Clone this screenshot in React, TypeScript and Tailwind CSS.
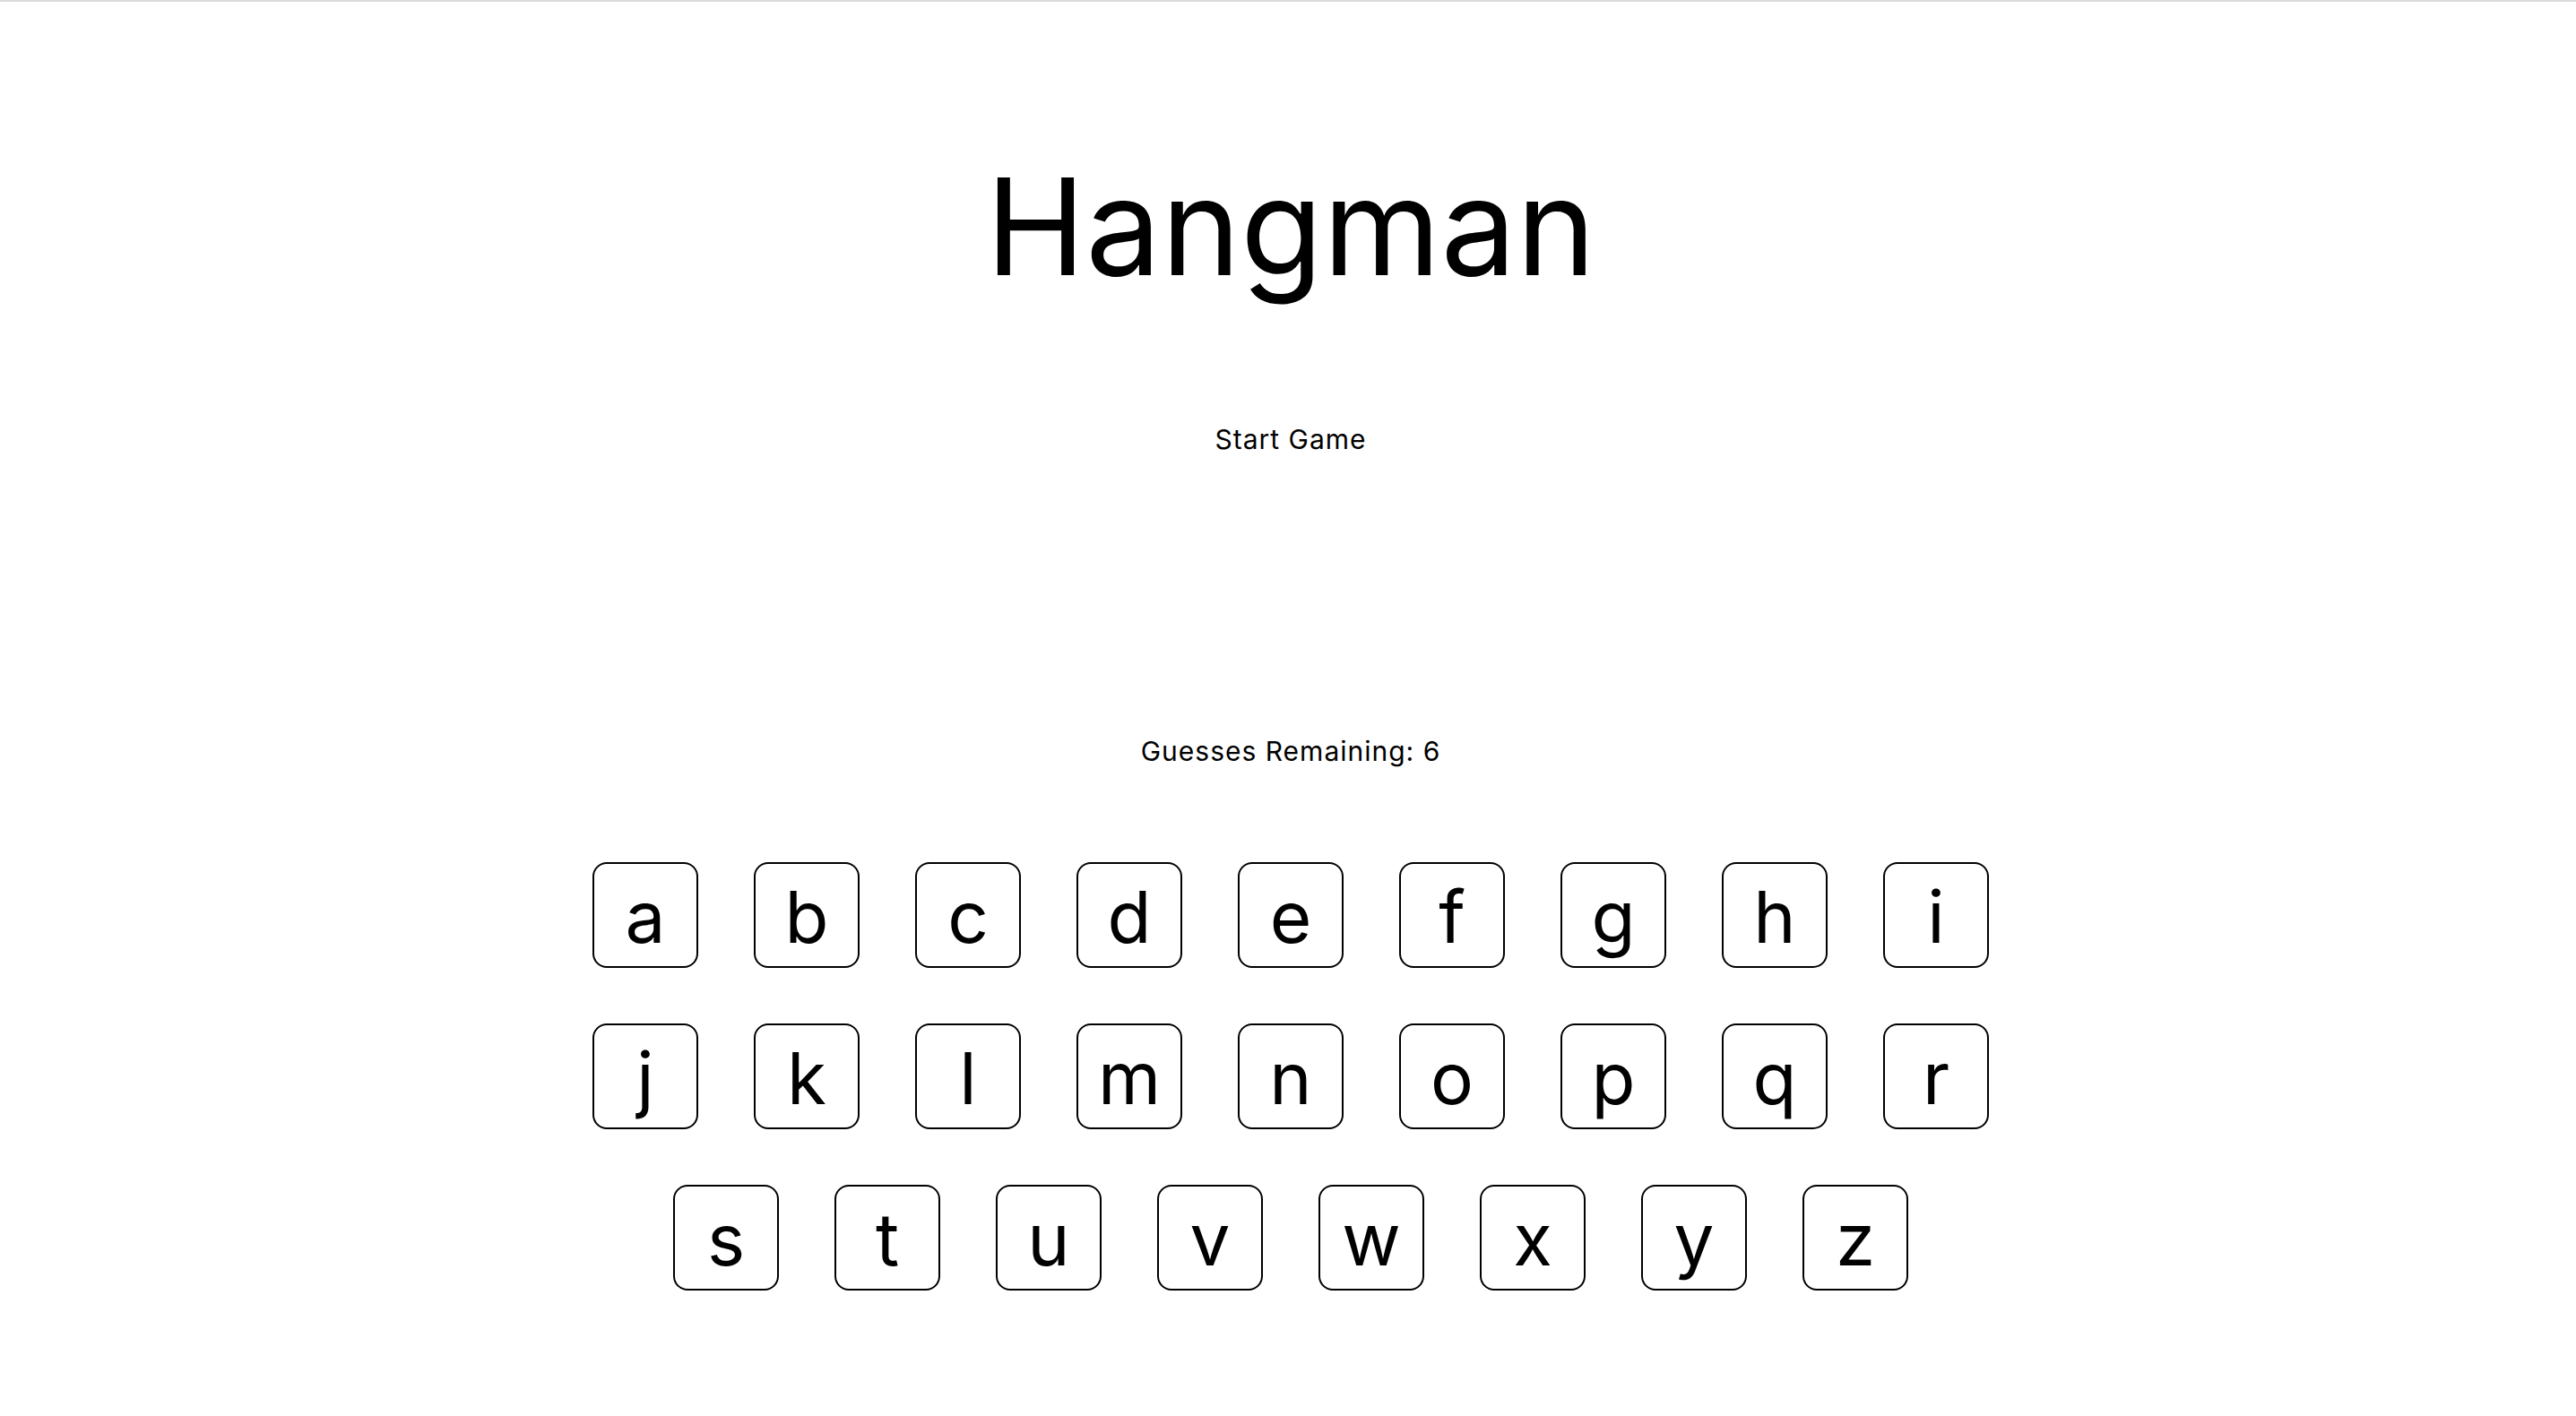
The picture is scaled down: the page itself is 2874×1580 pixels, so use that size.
import type { FunctionComponent } from "react";

const rows: string[][] = [
  ["a", "b", "c", "d", "e", "f", "g", "h", "i"],
  ["j", "k", "l", "m", "n", "o", "p", "q", "r"],
  ["s", "t", "u", "v", "w", "x", "y", "z"],
];

const LetterButton: FunctionComponent<{ letter: string }> = ({ letter }) => {
  return (
    <button className="flex h-[118px] w-[118px] items-center justify-center rounded-[16px] border-2 border-black bg-white pt-[4px] text-[80px] leading-none text-black">
      {letter}
    </button>
  );
};

const App: FunctionComponent = () => {
  return (
    <main
      className="flex min-h-screen flex-col items-center border-t-2 border-[#dadada] bg-white pl-[6px] text-black"
      style={{ fontFamily: "Inter, 'Liberation Sans', sans-serif" }}
    >
      <h1 className="mt-[176px] text-[150px] font-normal leading-none">Hangman</h1>
      <button className="mt-[147px] text-[30px] leading-none tracking-[1px]">Start Game</button>
      <p className="mt-[318px] text-[30px] leading-none tracking-[1px]">Guesses Remaining: 6</p>
      <section className="mt-[109px] flex flex-col items-center gap-[62px]">
        {rows.map((row, index) => (
          <div key={index} className="flex gap-[62px]">
            {row.map((letter) => (
              <LetterButton key={letter} letter={letter} />
            ))}
          </div>
        ))}
      </section>
    </main>
  );
};

export default App;
